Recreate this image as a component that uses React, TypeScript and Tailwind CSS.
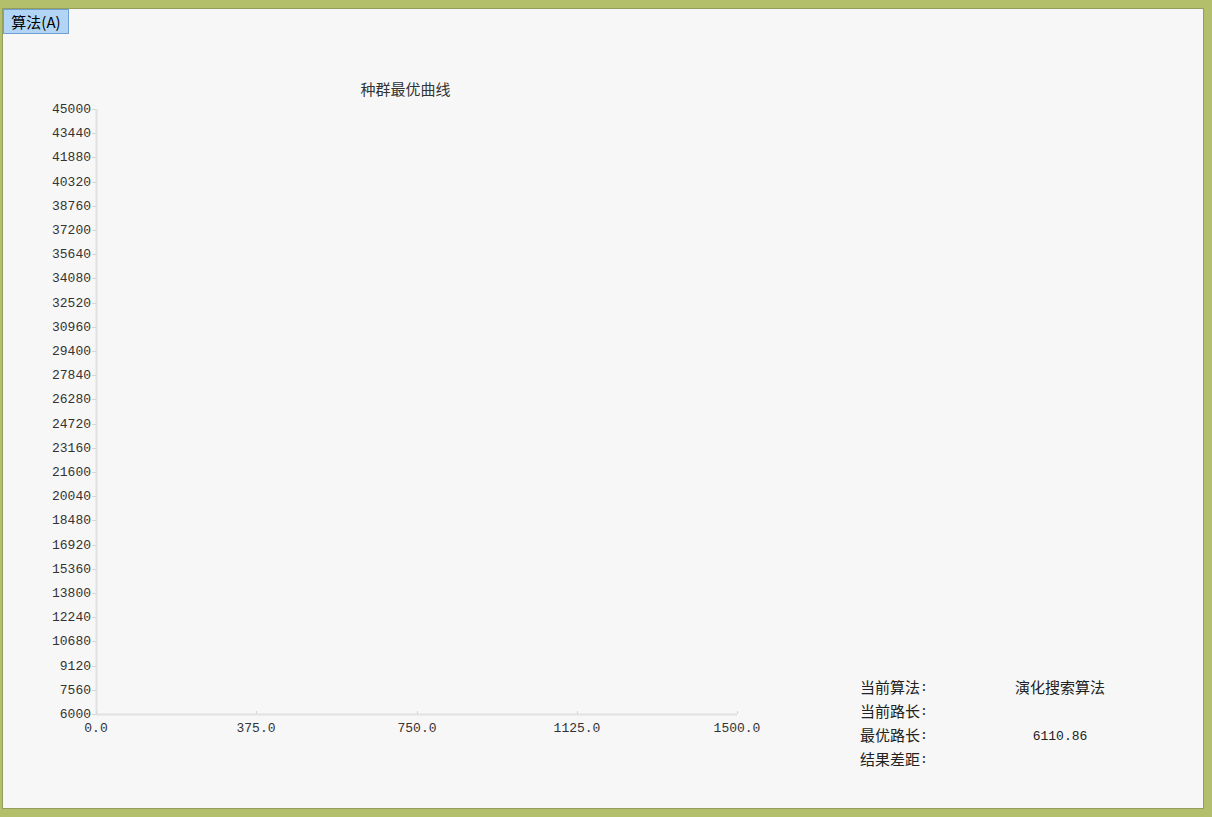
const yTicks = Array.from({ length: 26 }, (_, i) => 45000 - i * 1560);
const xTicks = ["0.0", "375.0", "750.0", "1125.0", "1500.0"];

// chart space: svg origin sits at page (3, 34)
const X0 = 93;
const X1 = 734;
const Y0 = 75;
const Y1 = 680;

function Chart() {
  const stepY = (Y1 - Y0) / 25;
  const stepX = (X1 - X0) / 4;
  return (
    <svg width={800} height={720} className="block shrink-0">
      <text
        x={402.5}
        y={54}
        textAnchor="middle"
        dominantBaseline="central"
        fontSize={15}
        fill="#333"
        fontFamily='"Noto Sans CJK SC", sans-serif'
      >
        种群最优曲线
      </text>
      <line x1={X0 + 0.5} y1={Y0} x2={X0 + 0.5} y2={Y1} stroke="#e2e2e2" strokeWidth={2} />
      <line x1={X0} y1={Y1 + 0.5} x2={X1} y2={Y1 + 0.5} stroke="#e2e2e2" strokeWidth={2} />
      {yTicks.map((v, i) => {
        const y = Math.round(Y0 + i * stepY);
        return (
          <g key={v}>
            <line x1={X0 - 4} y1={y + 0.5} x2={X0} y2={y + 0.5} stroke="#d6d6d6" />
            <text
              x={X0 - 5}
              y={y}
              textAnchor="end"
              dominantBaseline="central"
              fontSize={13}
              fill="#333"
              fontFamily='"Liberation Mono", monospace'
            >
              {v}
            </text>
          </g>
        );
      })}
      {xTicks.map((t, i) => {
        const x = Math.round(X0 + i * stepX);
        return (
          <g key={t}>
            <line x1={x + 0.5} y1={Y1 - 3} x2={x + 0.5} y2={Y1} stroke="#d6d6d6" />
            <text
              x={x}
              y={Y1 + 14}
              textAnchor="middle"
              dominantBaseline="central"
              fontSize={13}
              fill="#333"
              fontFamily='"Liberation Mono", monospace'
            >
              {t}
            </text>
          </g>
        );
      })}
    </svg>
  );
}

const rows: [string, string][] = [
  ["当前算法", "演化搜索算法"],
  ["当前路长", ""],
  ["最优路长", "6110.86"],
  ["结果差距", ""],
];

export default function App() {
  return (
    <div className="h-[817px] w-full bg-[#b3bf6a] pt-2 pl-[2px] pr-2 pb-2">
      <div
        className="h-full w-full border border-[#939d5c] bg-[#f7f7f7] text-[#222]"
        style={{ fontFamily: '"Noto Sans CJK SC", "Liberation Sans", sans-serif' }}
      >
        <div className="flex h-[25px]">
          <button className="h-[25px] w-[66px] border border-[#6f9fd3] bg-[#b3d5f5] text-[15px] leading-[22px] text-black">
            算法(A)
          </button>
        </div>
        <div className="flex">
          <Chart />
          <div className="ml-[57px] mt-[641px] grid grid-cols-[140px_120px] auto-rows-[24px] text-[15px]">
            {rows.map(([label, value]) => (
              <div key={label} className="contents">
                <span className="flex h-[24px] items-center">
                  {label}
                  <span className="font-['Liberation_Mono'] text-[13px] pt-[2px]">:</span>
                </span>
                <span
                  className={
                    /\d/.test(value)
                      ? "flex h-[24px] items-center justify-center font-['Liberation_Mono'] text-[13px] pt-[4px]"
                      : "flex h-[24px] items-center justify-center"
                  }
                >
                  {value}
                </span>
              </div>
            ))}
          </div>
        </div>
      </div>
    </div>
  );
}
